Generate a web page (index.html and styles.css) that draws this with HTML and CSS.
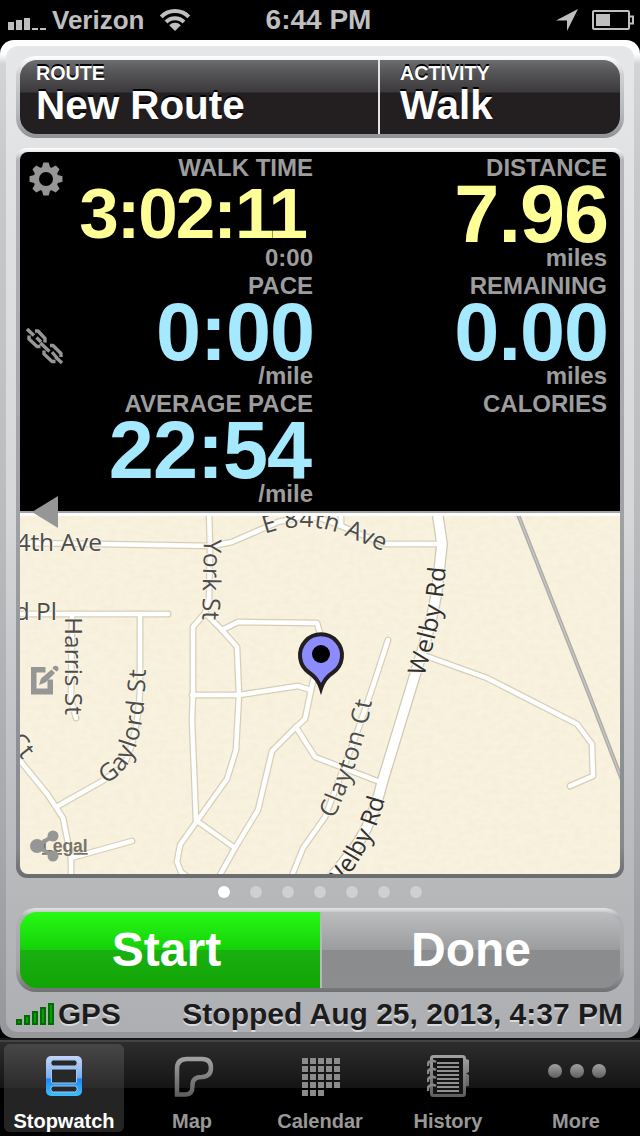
FILE: index.html
```html
<!DOCTYPE html>
<html lang="en">
<head>
  <meta charset="UTF-8">
  <meta name="viewport" content="width=device-width, initial-scale=1">
  <title>Stopwatch</title>
  <link rel="stylesheet" href="styles.css">
</head>
<body>
  <!-- Status bar -->
  <header class="status-bar">
    <div class="carrier">
      <svg class="signal" width="40" height="14" viewBox="0 0 40 14">
        <path d="M0 6h6v8H0zM8 4h6v10H8zM16 2h6v12h-6zM24 12h6v2h-6zM32 12h6v2h-6z"/>
      </svg>
      <span>Verizon</span>
      <svg class="wifi" width="32" height="24" viewBox="0 0 32 24">
        <path d="M2.2 8.8A19.5 19.5 0 0 1 29.800 8.800M7 14A12.700 12.700 0 0 1 25 14"/>
        <path class="wifi-dot" d="M10.200 17.200a8.200 8.200 0 0 1 11.600 0L16 23z"/>
      </svg>
    </div>
    <div class="clock">6:44 PM</div>
    <div class="indicators">
      <svg width="24" height="24" viewBox="0 0 24 24"><path d="M23 1L12 23V12.500H1z"/></svg>
      <svg width="42" height="20" viewBox="0 0 42 20">
        <rect class="outline" x="1" y="1" width="36" height="18" rx="1"/>
        <path class="outline" d="M38 6.500h3v7h-3"/>
        <path d="M4 4h14v12H4z"/>
      </svg>
    </div>
  </header>

  <main class="case">
    <div class="case-inner">
      <!-- Route / activity -->
      <div class="bezel picker">
        <button class="pick route"><small>ROUTE</small><b>New Route</b></button>
        <button class="pick activity"><small>ACTIVITY</small><b>Walk</b></button>
      </div>

      <div class="bezel panel">
        <section class="stats">
          <div class="stat">
            <div class="label">WALK TIME</div>
            <div class="value time yellow">3:02:11</div>
            <div class="unit">0:00</div>
          </div>
          <div class="stat">
            <div class="label">DISTANCE</div>
            <div class="value yellow">7.96</div>
            <div class="unit">miles</div>
          </div>
          <div class="stat">
            <div class="label">PACE</div>
            <div class="value">0:00</div>
            <div class="unit">/mile</div>
          </div>
          <div class="stat">
            <div class="label">REMAINING</div>
            <div class="value">0.00</div>
            <div class="unit">miles</div>
          </div>
          <div class="stat">
            <div class="label">AVERAGE PACE</div>
            <div class="value average">22:54</div>
            <div class="unit">/mile</div>
          </div>
          <div class="stat">
            <div class="label">CALORIES</div>
          </div>
        </section>

        <svg class="map" width="600" height="358" viewBox="20 516 600 358">
          <defs>
            <filter id="paper" x="0" y="0" width="100%" height="100%">
              <feTurbulence type="fractalNoise" baseFrequency="0.12 0.2" numOctaves="3" seed="4"/>
              <feColorMatrix values="0 0 0 0 .82  0 0 0 0 .75  0 0 0 0 .55  .45 0 0 0 -.14"/>
            </filter>
            <g id="streets">
              <path d="M15 543L100 544L212 546L232 542L278 522L300 517L320 518L341 526L384 544H442"/>
              <path d="M341 510V526"/>
              <path d="M209 510L210 548L209 600L205 613L193 627V695L192 720L196 821"/>
              <path d="M205 613L222 630L237 647L239 695L236 750L227 779L197 821L180 845L177 862L181 872L192 880"/>
              <path d="M222 630L238 622L317 623L322 640L318 660L311 690L305 719L296 727L272 751L258 810L235 848L216 882"/>
              <path d="M192 695H239L298 686L311 690"/>
              <path d="M296 727L315 757L380 782"/>
              <path d="M197 821L235 848"/>
              <path d="M15 614H168"/>
              <path d="M72 614L71 700L76 718"/>
              <path d="M140 614V690Q138 735 124 765L104 780L58 806"/>
              <path d="M14 752L22 763L48 795L63 818L71 858V882"/>
              <path d="M71 858L132 841"/>
              <path d="M388 640L375 680L359 727L325 817L303 848L293 873"/>
              <path d="M426 656L487 678L577 724L592 744L593 776L570 786"/>
            </g>
            <path id="avenue" d="M265 534Q304 520 341 534L400 558"/>
            <path id="york" d="M204 539L203 580L202 640"/>
            <path id="gaylord" d="M106 784C132 769 145 745 146 660"/>
            <path id="welby" d="M424 677C435 640 444 610 447 550"/>
            <path id="welby2" d="M305 930C352 878 373 844 385 799"/>
            <path id="clayton" d="M334 819Q364 752 374 690"/>
          </defs>
          <rect x="20" y="516" width="600" height="358" fill="#f9f2df"/>
          <rect x="20" y="516" width="600" height="358" filter="url(#paper)"/>
          <path class="railway" d="M517 512L590 697L622 780"/>
          <path class="railway-core" d="M517 512L590 697L622 780"/>
          <use href="#streets" class="casing"/>
          <path class="main-casing" d="M437 510L442 544L437 590Q432 620 425 642L382 783Q372 825 353 850L330 880"/>
          <use href="#streets" class="road"/>
          <path class="main-road" d="M437 510L442 544L437 590Q432 620 425 642L382 783Q372 825 353 850L330 880"/>
          <g class="street-names">
            <text x="102" y="551" text-anchor="end">4th Ave</text>
            <text x="57" y="620" text-anchor="end">d Pl</text>
            <text><textPath href="#avenue" textLength="123">E 84th Ave</textPath></text>
            <text><textPath href="#york" textLength="81">York St</textPath></text>
            <text transform="translate(65 617) rotate(90)" textLength="98">Harris St</text>
            <text transform="translate(8 741) rotate(52)">Ct</text>
            <text><textPath href="#gaylord" textLength="127">Gaylord St</textPath></text>
            <text><textPath href="#clayton" textLength="124">Clayton Ct</textPath></text>
            <text class="dark"><textPath href="#welby" textLength="112">Welby Rd</textPath></text>
            <text class="dark" text-anchor="end"><textPath href="#welby2" startOffset="100%">Welby Rd</textPath></text>
          </g>
          <text class="legal" x="42" y="852">Legal</text>
          <path class="pin" d="M321 688.500C319 682 316 677 309 672.500A21 21 0 1 1 333 672.500C326 677 323 682 321 688.500Z"/>
          <circle cx="321" cy="654" r="9"/>
        </svg>

        <!-- Tool icons over the stats and the map -->
        <nav class="tools">
          <svg class="gear" width="34" height="34" viewBox="-17 -17 34 34">
            <g id="teeth"><path d="M-4.500 -10L-2.700 -16.500H2.700L4.500 -10V10L2.700 16.500H-2.700L-4.500 10z"/><path d="M-10 -4.500L-16.500 -2.700V2.700L-10 4.500H10L16.500 2.700V-2.700L10 -4.500z"/></g>
            <use href="#teeth" transform="rotate(45)"/>
            <circle r="12.500"/>
            <circle r="7" fill="#000"/>
          </svg>
          <svg class="chain" width="38" height="38" viewBox="0 0 38 38">
            <path d="M1 2L8 8.500M14.500 16L23.500 24.500M29.500 30L36 36"/>
            <path d="M9 4H12L19 11.500V15.500M3 8.500V12L11 19.500H14.500M15 15L10.500 10.500"/>
            <path d="M24 18.500H27L35 26.500V30M18 23.500V27L26 34.500H29.500M31 31L26 25"/>
          </svg>
          <svg class="fold" width="26" height="32" viewBox="0 0 26 32"><path d="M0 16L26 0V32z"/></svg>
          <svg class="edit" width="28" height="30" viewBox="0 0 28 30">
            <path d="M0 2H14.500V7.500H5.500V23.500H16.500V14.500H22V29.500H0z"/>
            <path d="M8 20L10 13.500L20.500 4.500L24 8L14.500 17.500zM21.500 3.500A3 3 0 1 1 25.500 6.500z"/>
          </svg>
          <svg class="share" width="30" height="32" viewBox="0 0 30 32">
            <path d="M23 6L7 16L23 26" fill="none" stroke="#969696" stroke-width="4"/>
            <circle cx="7" cy="16" r="7"/><circle cx="23" cy="6" r="5.500"/><circle cx="23" cy="26" r="5.500"/>
          </svg>
        </nav>
      </div>

      <div class="pages"><i class="on"></i><i></i><i></i><i></i><i></i><i></i><i></i></div>

      <div class="bezel actions">
        <button class="start">Start</button>
        <button class="done">Done</button>
      </div>

      <div class="gps-row">
        <svg width="38" height="22" viewBox="0 0 38 22">
          <path d="M1 17h4v4H1zM9 13h4v8H9zM17 9h4v12h-4zM25 5h4v16h-4zM33 1h4v20h-4z"/>
        </svg>
        <span class="gps">GPS</span>
        <span class="state">Stopped Aug 25, 2013, 4:37 PM</span>
      </div>
    </div>
  </main>

  <!-- Tab bar -->
  <nav class="tabs">
    <svg width="0" height="0" class="defs">
      <defs>
        <linearGradient id="gray" x1="0" y1="0" x2="0" y2="1"><stop offset="0" stop-color="#a0a0a0"/><stop offset="1" stop-color="#606060"/></linearGradient>
        <linearGradient id="blue" x1="0" y1="0" x2="0" y2="1"><stop offset="0" stop-color="#c3d6f8"/><stop offset=".55" stop-color="#7aaef0"/><stop offset=".57" stop-color="#1e86f0"/><stop offset="1" stop-color="#3cc0fc"/></linearGradient>
        <pattern id="days" width="8" height="8" patternUnits="userSpaceOnUse"><path d="M0 0h6v6H0z" fill="#aaa"/></pattern>
      </defs>
    </svg>
    <a class="tab selected">
      <svg width="36" height="40" viewBox="0 0 36 40">
        <rect width="36" height="40" rx="5" fill="url(#blue)"/>
        <g fill="#282828" stroke="#9fcaf8" stroke-width="1">
          <rect x="5" y="4" width="26" height="6" rx="2.500"/>
          <rect x="5.500" y="13" width="25" height="14" rx="1"/>
          <rect x="5" y="30" width="26" height="6" rx="2.500"/>
        </g>
      </svg>
      <span>Stopwatch</span>
    </a>
    <a class="tab">
      <svg class="map-icon" width="40" height="42" viewBox="0 0 40 42">
        <path d="M3 38.500V13Q3 3 13 3H28Q37 3 37 12Q37 20.500 28 21Q19 21 18.500 28V30Q18.500 38.500 12 38.500Z" fill="none" stroke="url(#gray)" stroke-width="4.500"/>
      </svg>
      <span>Map</span>
    </a>
    <a class="tab">
      <svg class="calendar-icon" width="38" height="38" viewBox="0 0 38 38">
        <path d="M0 0H38V30H22V38H0z" fill="url(#days)"/>
        <path d="M0 0H38V30H22V38H0z" fill="#000" opacity=".18"/>
      </svg>
      <span>Calendar</span>
    </a>
    <a class="tab">
      <svg width="42" height="42" viewBox="0 0 42 42">
        <path d="M36 3L42 5V17L39 18.500L42 20V31L36 32z" fill="url(#gray)"/>
        <rect x="4.500" y="1.500" width="33" height="39" rx="2" fill="#151515" stroke="url(#gray)" stroke-width="3"/>
        <path d="M10 7H32V9H10zM10 11H32V13H10zM10 15H32V17H10zM10 19H32V21H10zM10 23H32V25H10zM10 27H32V29H10zM10 31H32V33H10zM10 35H32V37H10z" fill="#909090"/>
        <path d="M9 7C4 4 0 7 1 11M9 15C4 12 0 15 1 19M9 23C4 20 0 23 1 27M9 31C4 28 0 31 1 36" fill="none" stroke="#888" stroke-width="2.600"/>
      </svg>
      <span>History</span>
    </a>
    <a class="tab">
      <svg width="60" height="16" viewBox="0 0 60 16" class="more"><g fill="url(#gray)"><circle cx="9" cy="8" r="7"/><circle cx="31" cy="8" r="7"/><circle cx="53" cy="8" r="7"/></g></svg>
      <span>More</span>
    </a>
  </nav>
</body>
</html>
```
FILE: styles.css
```css
* {
  box-sizing: border-box;
}

body {
  margin: 0;
  width: 640px;
  height: 1136px;
  background: #000;
  font-family: "Liberation Sans", Arial, sans-serif;
  font-weight: bold;
  display: flex;
  flex-direction: column;
  overflow: hidden;
}

button {
  font: inherit;
  border: 0;
  padding: 0;
  margin: 0;
  background: none;
}

svg {
  display: block;
  flex: none;
}

/* status bar */
.status-bar {
  height: 40px;
  display: grid;
  grid-template-columns: 1fr auto 1fr;
  align-items: center;
  padding: 0 6px 0 8px;
  color: #bfbfbf;
  fill: #bfbfbf;
}

.carrier {
  display: flex;
  align-items: center;
  font-size: 26px;
}

.signal {
  margin: 5px 4px 0 0;
}

.wifi {
  margin-left: 15px;
  fill: none;
  stroke: #bfbfbf;
  stroke-width: 4;
}

.wifi-dot {
  fill: #bfbfbf;
  stroke: none;
}

.clock {
  font-size: 28px;
  margin-right: 5px;
}

.indicators {
  display: flex;
  justify-content: flex-end;
  align-items: center;
  gap: 13px;
}

.indicators .outline {
  fill: none;
  stroke: #bfbfbf;
  stroke-width: 2;
}

/* gray case around everything */
.case {
  flex: none;
  height: 998px;
  padding: 6px;
  border-radius: 14px;
  background: linear-gradient(#fff 0, #fff 14px, #d3d4d6 24px, #c8c9cb 130px, #bcbdbf 450px, #a8a9ad 780px, #96979b 100%);
}

.case-inner {
  height: 986px;
  padding: 10px 10px 0;
  border-radius: 12px;
  background: linear-gradient(#e6e7e9 0, #e1e2e4 120px, #d6d7d9 470px, #c5c6c8 650px, #b7b8ba 840px, #aeafb3 100%);
  display: flex;
  flex-direction: column;
}

.bezel {
  padding: 4px;
  flex: none;
}

/* route / activity */
.picker {
  height: 82px;
  display: flex;
  border-radius: 20px;
  background: linear-gradient(#fff, #cfd0d2 18px, #b4b5b8 60px, #909194);
}

.pick {
  height: 74px;
  display: flex;
  flex-direction: column;
  align-items: flex-start;
  color: #fff;
  text-shadow: 0 -2px 0 #000;
  background: linear-gradient(#6d6e71, #59595b 10px, #3b393b 32px, #231f20 33px);
}

.pick small {
  font-size: 19.700px;
  line-height: 22px;
  margin-top: 2px;
}

.pick b {
  font-size: 40.400px;
  line-height: 42px;
}

.route {
  width: 358px;
  padding-left: 16px;
  border-radius: 17px 0 0 17px;
}

.activity {
  flex: 1;
  padding-left: 20px;
  border-left: 2px solid #e2e3e5;
  border-radius: 0 17px 17px 0;
}

/* stats + map */
.panel {
  position: relative;
  height: 730px;
  margin-top: 10px;
  border-radius: 11px;
  background: linear-gradient(#fff, #b4b5b8 12px, #a4a6aa 300px, #85888c 700px, #6c6d70 728px);
}

.stats {
  height: 364px;
  padding: 2px 13px 0 0;
  background: #000;
  border-radius: 8px 8px 0 0;
  border-bottom: 3px solid #fff;
  box-shadow: inset 0 -2px 0 #a3a3a3;
  display: grid;
  grid-template-columns: 293px 294px;
  grid-template-rows: repeat(3, 118px);
  text-align: right;
  color: #9d9d9d;
  font-size: 24px;
}

.label {
  line-height: 28px;
}

.value {
  font-size: 81px;
  line-height: 64px;
  letter-spacing: -1px;
  margin-right: -1px;
  color: #a4e9ff;
}

.value.time {
  font-size: 71px;
  letter-spacing: -2px;
  margin-right: 7px;
}

.value.average {
  margin-right: 2px;
}

.value.yellow {
  color: #ffff97;
}

.unit {
  line-height: 24px;
}

.map {
  border-radius: 0 0 8px 8px;
}

.casing,
.road,
.main-casing,
.main-road,
.railway,
.railway-core {
  fill: none;
  stroke-linejoin: round;
  stroke-linecap: round;
}

.casing {
  stroke: #d6cfb8;
  stroke-width: 7px;
}

.road {
  stroke: #fff;
  stroke-width: 4.500px;
}

.main-casing {
  stroke: #cfc8b4;
  stroke-width: 12px;
}

.main-road {
  stroke: #fff;
  stroke-width: 9.500px;
}

.railway {
  stroke: #aaa;
  stroke-width: 4px;
}

.railway-core {
  stroke: #c6c4c0;
  stroke-width: 1.500px;
}

.street-names {
  font: 500 24.500px "Open Sans", "Noto Sans", sans-serif;
  fill: #4c4c4c;
  stroke: #faf5e6;
  stroke-width: 2px;
  paint-order: stroke;
}

.street-names .dark {
  fill: #303030;
}

.legal {
  font-size: 17.500px;
  fill: #77746a;
  text-decoration: underline;
}

.pin {
  fill: #8c8cff;
  stroke: #231f20;
  stroke-width: 4px;
  stroke-linejoin: miter;
}

.tools {
  position: absolute;
  left: 9px;
  top: 14px;
  width: 40px;
  fill: #969696;
}

.gear {
  margin-left: 4px;
}

.chain {
  margin: 131px 0 0 1px;
  fill: none;
  stroke: #969696;
  stroke-width: 3.400px;
  stroke-linejoin: round;
}

.fold {
  margin: 131px 0 0 7px;
}

.edit {
  margin: 137px 0 0 6px;
}

.share {
  margin: 135px 0 0 5px;
}

/* page dots */
.pages {
  flex: none;
  height: 30px;
  padding-top: 8px;
  display: flex;
  justify-content: center;
  gap: 20px;
}

.pages i {
  width: 12px;
  height: 12px;
  border-radius: 50%;
  background: #cfd0d2;
}

.pages .on {
  background: #fff;
}

/* start / done */
.actions {
  height: 84px;
  display: flex;
  border-radius: 20px;
  background: linear-gradient(#e4e5e6, #b0b1b4 8px, #a3a4a7 60px, #6f7073);
}

.actions button {
  height: 76px;
  flex: 1;
  color: #fff;
  font-size: 48px;
  line-height: 74px;
}

.actions .start {
  flex: none;
  width: 300px;
  padding-right: 7px;
  border-radius: 17px 0 0 17px;
  background: linear-gradient(#28fa14, #14d00a 50%, #1ab012 50%, #12a404);
}

.actions .done {
  border-left: 2px solid #b7b8ba;
  border-radius: 0 17px 17px 0;
  background: linear-gradient(#bcbdbf, #9b9c9e 50%, #8b8c8e 50%, #8c8d8f);
}

.gps-row {
  flex: none;
  display: flex;
  height: 43px;
  align-items: center;
  font-size: 29.700px;
  color: #1c1c1c;
  text-shadow: 0 2px 0 #d9dadc;
}

.gps-row svg {
  fill: #0a9c06;
  stroke: #006b00;
  stroke-width: 2px;
}

.gps {
  margin-left: 4px;
}

.state {
  margin: 0 1px 0 auto;
  font-size: 30px;
}

/* tab bar */
.tabs {
  height: 98px;
  padding: 4px 0;
  border-top: 2px solid #161616;
  box-shadow: inset 0 2px 0 #444;
  background: linear-gradient(#2e2e2e, #141414 48px, #000 48px);
  display: flex;
}

.defs {
  position: absolute;
}

.tab {
  width: 120px;
  height: 88px;
  margin: 0 4px;
  border-radius: 6px;
  display: grid;
  grid-template-rows: 64px 24px;
  place-items: center;
  font-size: 20px;
  line-height: 24px;
  color: #989898;
}

.tab span {
  margin-top: 2px;
}

.tab.selected {
  color: #fff;
  background: linear-gradient(#474747, #2b2b2b 44px, #242424 44px);
}

.map-icon {
  margin: 2px 0 0 4px;
}

.calendar-icon {
  margin: 2px 0 0 2px;
}

.tab .more {
  margin-bottom: 10px;
}
```
